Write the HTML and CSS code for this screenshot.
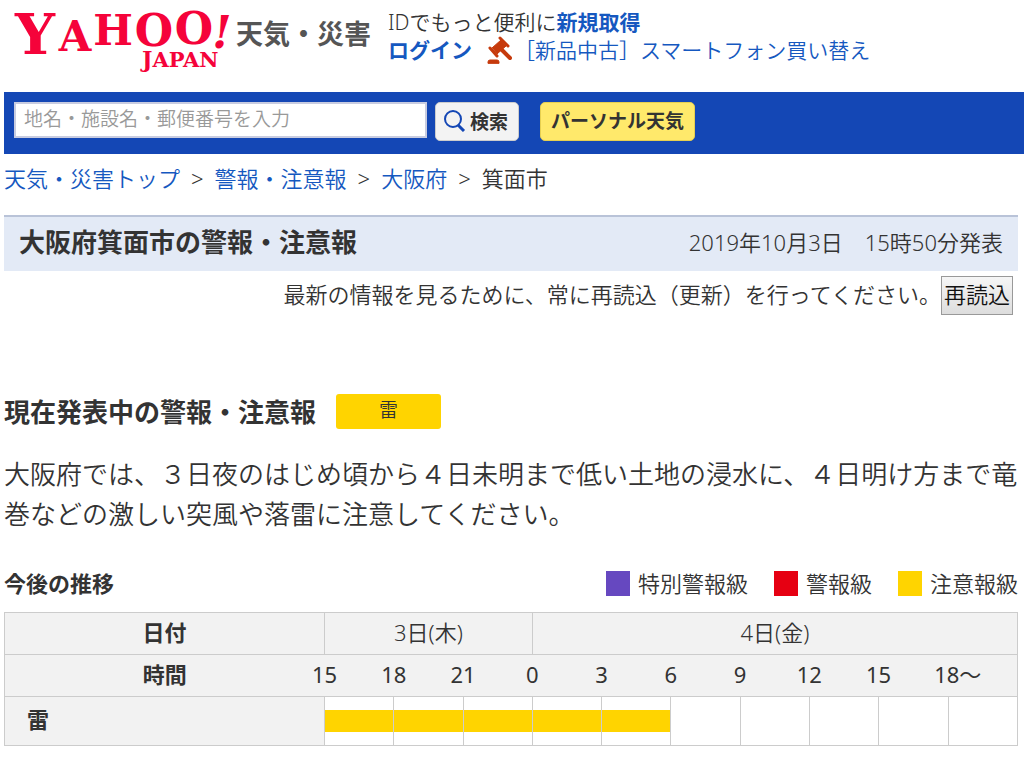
FILE: index.html
```html
<!DOCTYPE html>
<html lang="ja">
<head>
<meta charset="utf-8">
<meta name="viewport" content="width=device-width, initial-scale=1">
<title>大阪府箕面市の警報・注意報</title>
<link rel="stylesheet" href="styles.css">
</head>
<body>
<header class="masthead">
  <a class="logo" href="#" aria-label="YAHOO! JAPAN 天気・災害">
    <svg class="logo-mark" viewBox="0 0 220 64" width="220" height="64">
      <g class="logo-yahoo">
        <text x="23" y="46" font-size="56">Y</text>
        <text x="63" y="43" font-size="42">A</text>
        <text x="101" y="37" font-size="42">H</text>
        <text x="142" y="38" font-size="44">O</text>
        <text x="182" y="36" font-size="44">O</text>
        <text x="210" y="40" font-size="44" font-style="italic">!</text>
      </g>
      <text class="logo-japan" x="130" y="59" font-size="22">J<tspan font-size="21">APAN</tspan></text>
    </svg>
    <span class="logo-service">天気・災害</span>
  </a>
  <div class="account">
    <div>IDでもっと便利に<a class="strong" href="#">新規取得</a></div>
    <div class="account-row">
      <a class="strong" href="#">ログイン</a>
      <a class="promo" href="#">
        <svg viewBox="0 0 28 28" width="28" height="28" aria-hidden="true">
          <g fill="#c63a0c" stroke="#c63a0c" stroke-linecap="round" stroke-linejoin="round">
            <path d="M8 12 17 4l5 6-9 8z"/>
            <path d="m6 12 7 8M16 2l8 8" stroke-width="3"/>
            <path d="m18 14 8 8" stroke-width="4"/>
            <path d="M4 27v-1q0-2 2-2h7q2 0 2 2v1z"/>
          </g>
        </svg>
        <span>［新品中古］スマートフォン買い替え</span>
      </a>
    </div>
  </div>
</header>

<form class="searchbar">
  <input class="search-input" type="text" aria-label="地名・施設名・郵便番号" placeholder="地名・施設名・郵便番号を入力">
  <button class="btn btn-search" type="button">
    <svg viewBox="0 0 22 22" width="22" height="22" aria-hidden="true"><g fill="none" stroke="#1447b5" stroke-width="2"><circle cx="9" cy="9" r="8"/><path d="m14 15 6 6" stroke-width="3"/></g></svg>
    <span>検索</span>
  </button>
  <button class="btn btn-personal" type="button">パーソナル天気</button>
</form>

<main class="content">
  <nav class="crumbs" aria-label="パンくず">
    <a href="#">天気・災害トップ</a><span>&gt;</span><a href="#">警報・注意報</a><span>&gt;</span><a href="#">大阪府</a><span>&gt;</span><span>箕面市</span>
  </nav>

  <div class="titlebar">
    <h1 class="title">大阪府箕面市の警報・注意報</h1>
    <span>2019年10月3日　15時50分発表</span>
  </div>
  <div class="reload">
    <span>最新の情報を見るために、常に再読込（更新）を行ってください。</span>
    <button class="btn-reload" type="button">再読込</button>
  </div>

  <section class="current">
    <h2 class="title">現在発表中の警報・注意報</h2>
    <span class="badge">雷</span>
  </section>
  <p class="summary">大阪府では、３日夜のはじめ頃から４日未明まで低い土地の浸水に、４日明け方まで竜巻などの激しい突風や落雷に注意してください。</p>

  <section>
    <div class="trend">
      <h3 class="trend-title">今後の推移</h3>
      <ul class="legend">
        <li class="key key-special">特別警報級</li>
        <li class="key key-warning">警報級</li>
        <li class="key key-advisory">注意報級</li>
      </ul>
    </div>
    <table class="timeline">
      <colgroup><col class="col-name"><col span="10"></colgroup>
      <tr class="head"><th scope="row">日付</th><td colspan="3">3日(木)</td><td colspan="7">4日(金)</td></tr>
      <tr class="head hours"><th scope="row">時間</th><td colspan="10">
        <div class="ticks"><span>15</span><span>18</span><span>21</span><span>0</span><span>3</span><span>6</span><span>9</span><span>12</span><span>15</span><span class="tick-last">18～</span></div>
      </td></tr>
      <tr class="levels"><th scope="row">雷</th>
        <td><div class="bar"></div></td><td><div class="bar"></div></td><td><div class="bar"></div></td><td><div class="bar"></div></td><td><div class="bar"></div></td>
        <td></td><td></td><td></td><td></td><td></td></tr>
    </table>
  </section>
</main>
</body>
</html>
```

FILE: styles.css
```css
* { box-sizing: border-box; }
body {
  margin: 0;
  padding-left: 4px;
  background: #fff;
  color: #333;
  font-family: "Noto Sans", "Noto Sans CJK JP", sans-serif;
  font-size: 22px;
  font-weight: 350;
  line-height: 28px;
}
a { color: #1558c0; text-decoration: none; }
h1, h2, h3, p, ul { margin: 0; padding: 0; }
button, input { font-family: inherit; font-weight: inherit; color: inherit; }

.masthead { display: flex; height: 92px; padding: 8px 0 0 8px; }
.logo { display: flex; width: 376px; }
.logo-mark { flex: none; overflow: visible; }
.logo-yahoo { fill: #f5033a; font-family: "DejaVu Serif", serif; font-weight: 700; text-anchor: middle; }
.logo-japan { fill: #f5033a; font-family: "DejaVu Serif", serif; font-weight: 700; }
.logo-service { padding: 8px 0 0 4px; font-size: 27px; line-height: 36px; font-weight: 700; color: #555; white-space: nowrap; }
.account { font-size: 21px; white-space: nowrap; }
.account-row { display: flex; gap: 12px; }
.promo { display: flex; gap: 2px; }
.strong { font-weight: 700; }

.searchbar { display: flex; align-items: flex-start; height: 62px; padding: 10px; background: #1447b5; }
.search-input {
  width: 413px; height: 36px; padding: 0 8px 2px;
  border: 2px solid #c8cce0; border-radius: 0; background: #fff; font-size: 19px;
}
.search-input::placeholder { color: #999; opacity: 1; }
.btn { display: flex; align-items: center; justify-content: center; height: 39px; border-radius: 5px; font-size: 19px; font-weight: 700; white-space: nowrap; }
.btn-search { gap: 4px; width: 84px; margin: 0 21px 0 8px; padding: 0 2px 2px 0; border: 1px solid #ccc; background: #f3f3f3; }
.btn-personal { padding: 0 10px 4px; border: 1px solid #e6cf50; background: #ffe96b; }

.content { padding-right: 6px; }
.crumbs { display: flex; gap: 11px; padding: 10px 0 23px; }
.titlebar {
  display: flex; align-items: center; justify-content: space-between;
  height: 56px; padding: 0 15px 4px; border-top: 2px solid #b9c3d8; background: #e3eaf6;
}
.title { font-size: 26px; line-height: 34px; font-weight: 700; }
.reload { display: flex; justify-content: flex-end; align-items: flex-start; padding: 5px 5px 0 0; line-height: 36px; }
.btn-reload {
  height: 39px; padding: 0 2px 3px; border: 1px solid #999; border-radius: 0;
  background: linear-gradient(#f6f6f6, #ddd); color: #111; font-size: 22px; line-height: 34px;
}

.current { display: flex; align-items: center; gap: 20px; padding: 79px 0 25px; }
.badge { width: 105px; height: 35px; border-radius: 3px; background: #ffd400; font-size: 19px; line-height: 32px; text-align: center; }
.summary { font-size: 26px; line-height: 40px; }

.trend { display: flex; justify-content: space-between; padding: 35px 0 15px; }
.trend-title { font-size: 22px; font-weight: 700; }
.legend { display: flex; gap: 26px; list-style: none; }
.key { display: flex; align-items: center; gap: 8px; }
.key::before { content: ""; width: 24px; height: 25px; }
.key-special::before { background: #6648c0; }
.key-warning::before { background: #e60012; }
.key-advisory::before { background: #ffd400; }

.timeline { width: 100%; table-layout: fixed; border-collapse: collapse; }
.timeline th, .timeline td { padding: 0; border: 1px solid #ccc; text-align: center; }
.timeline th { background: #f2f2f2; font-weight: 700; }
.col-name { width: 320px; }
.head { height: 42px; }
.timeline .head th, .timeline .head td { padding-bottom: 4px; }
.head td { background: #f2f2f2; }
.timeline .hours th { border-right: 0; }
.timeline .hours td { border-left: 0; }
.ticks { display: grid; grid-template-columns: repeat(10, 1fr); margin: 0 5% 0 -5%; font-weight: 400; white-space: nowrap; }
.tick-last { padding-left: 20px; }
.levels { height: 49px; }
.timeline .levels th { padding: 0 0 4px 22px; text-align: left; }
.bar { height: 22px; background: #ffd400; }
```
